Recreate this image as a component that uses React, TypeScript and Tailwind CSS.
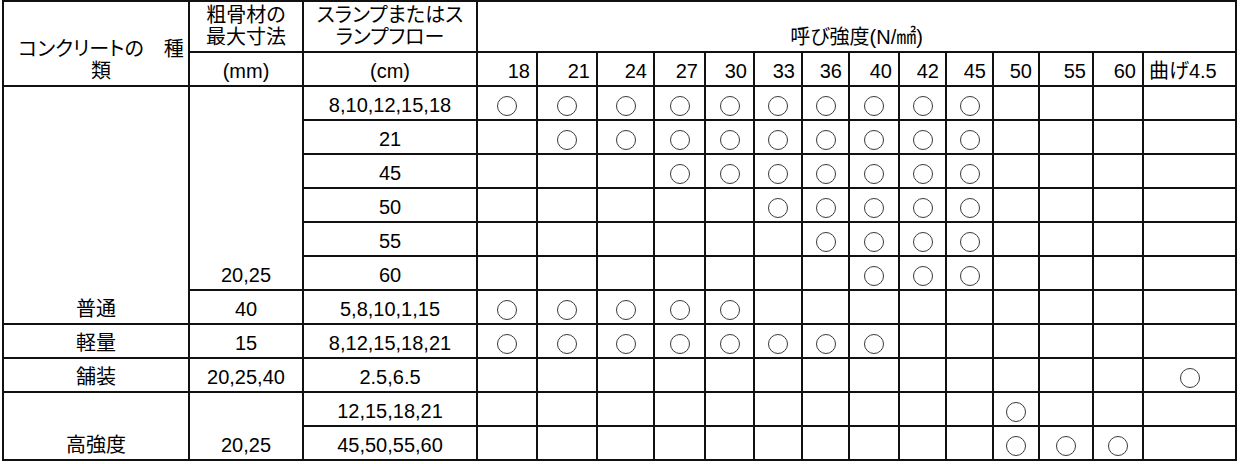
import React from "react"

const strengths = ["18", "21", "24", "27", "30", "33", "36", "40", "42", "45", "50", "55", "60"]
const colWidths = [186, 114, 174, 60, 60, 57, 51, 49, 48, 47, 50, 47, 47, 46, 54, 50, 93]

type Row = {
  type?: { label: string; span: number }
  agg?: { label: string; span: number }
  slump: string
  marks: number[]
}

const range = (a: number, b: number) => Array.from({ length: b - a + 1 }, (_, i) => a + i)

const rows: Row[] = [
  { type: { label: "普通", span: 7 }, agg: { label: "20,25", span: 6 }, slump: "8,10,12,15,18", marks: range(0, 9) },
  { slump: "21", marks: range(1, 9) },
  { slump: "45", marks: range(3, 9) },
  { slump: "50", marks: range(5, 9) },
  { slump: "55", marks: range(6, 9) },
  { slump: "60", marks: range(7, 9) },
  { agg: { label: "40", span: 1 }, slump: "5,8,10,1,15", marks: range(0, 4) },
  { type: { label: "軽量", span: 1 }, agg: { label: "15", span: 1 }, slump: "8,12,15,18,21", marks: range(0, 7) },
  { type: { label: "舗装", span: 1 }, agg: { label: "20,25,40", span: 1 }, slump: "2.5,6.5", marks: [13] },
  { type: { label: "高強度", span: 2 }, agg: { label: "20,25", span: 2 }, slump: "12,15,18,21", marks: [10] },
  { slump: "45,50,55,60", marks: [10, 11, 12] },
]

const cell = "border-2 border-[#111] align-bottom p-0 pb-[3px] leading-[22px]"

function Mark() {
  return <div className="mx-auto mt-[5px] h-5 w-5 rounded-full border-[1.5px] border-[#3a3a3a]" />
}

export default function App() {
  return (
    <div
      className="bg-white text-black text-[20px] [font-feature-settings:'palt'] pl-[2px]"
      style={{ fontFamily: '"Liberation Sans", "Noto Sans CJK JP", sans-serif' }}
    >
      <table className="table-fixed border-collapse w-[1235px]">
        <colgroup>
          {colWidths.map((w, i) => (
            <col key={i} style={{ width: w }} />
          ))}
        </colgroup>
        <thead>
          <tr className="h-[51px]">
            <td rowSpan={2} className={`${cell} text-center whitespace-nowrap pl-[10px]`}>
              コンクリートの　種
              <br />
              類
            </td>
            <td className={`${cell} text-center`}>
              粗骨材の
              <br />
              最大寸法
            </td>
            <td className={`${cell} text-center`}>
              スランプまたはス
              <br />
              ランプフロー
            </td>
            <td colSpan={14} className={`${cell} text-center`}>
              呼び強度(N/㎟)
            </td>
          </tr>
          <tr className="h-[34px]">
            <td className={`${cell} text-center`}>(mm)</td>
            <td className={`${cell} text-center`}>(cm)</td>
            {strengths.map((s) => (
              <td key={s} className={`${cell} text-right pr-[6px]`}>
                {s}
              </td>
            ))}
            <td className={`${cell} text-left pl-[5px] whitespace-nowrap`}>曲げ4.5</td>
          </tr>
        </thead>
        <tbody>
          {rows.map((r, ri) => (
            <tr key={ri} className="h-[34px]">
              {r.type && (
                <td rowSpan={r.type.span} className={`${cell} text-center`}>
                  {r.type.label}
                </td>
              )}
              {r.agg && (
                <td rowSpan={r.agg.span} className={`${cell} text-center`}>
                  {r.agg.label}
                </td>
              )}
              <td className={`${cell} text-center`}>{r.slump}</td>
              {range(0, 13).map((c) => (
                <td key={c} className="border-2 border-[#111] p-0 align-middle">
                  {r.marks.includes(c) && <Mark />}
                </td>
              ))}
            </tr>
          ))}
        </tbody>
      </table>
    </div>
  )
}
